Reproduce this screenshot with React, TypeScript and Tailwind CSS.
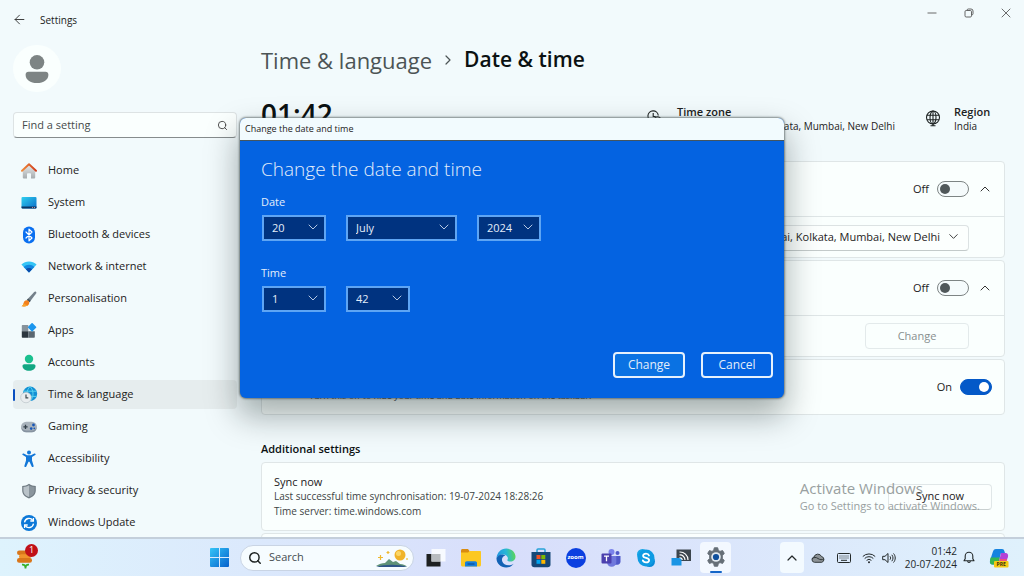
import React, { useState } from 'react';
import { ArrowLeft, ChevronDown, ChevronRight, ChevronUp, Minus, Search, X } from 'lucide-react';

interface NavItem {
  label: string;
  icon: React.ReactNode;
}

const HomeIcon = () => (
  <svg width="16" height="16" viewBox="0 0 16 16">
    <defs>
      <linearGradient id="wall" x1="0" y1="0" x2="0" y2="1">
        <stop offset="0" stopColor="#e3e5e6" />
        <stop offset="1" stopColor="#a5abae" />
      </linearGradient>
      <linearGradient id="roof" x1="0" y1="0" x2="1" y2="0">
        <stop offset="0" stopColor="#ef8a3a" />
        <stop offset="1" stopColor="#cf3b1b" />
      </linearGradient>
    </defs>
    <path d="M8 2.6 14.2 8v6.600a1 1 0 0 1-1 1H10V11a.8.8 0 0 0-.8-.8H6.800A.8.8 0 0 0 6 11v4.600H2.800a1 1 0 0 1-1-1V8z" fill="url(#wall)" />
    <path d="M1 7.800 8 1.300l7 6.500" fill="none" stroke="url(#roof)" strokeWidth="1.900" strokeLinecap="round" strokeLinejoin="round" />
  </svg>
);

const SystemIcon = () => (
  <svg width="16" height="16" viewBox="0 0 16 16">
    <defs>
      <linearGradient id="screen" x1="0" y1="0" x2="1" y2="1">
        <stop offset="0" stopColor="#2fd0f0" />
        <stop offset="1" stopColor="#0a6cc8" />
      </linearGradient>
    </defs>
    <rect x="0.5" y="2" width="15" height="11.500" rx="1" fill="url(#screen)" />
    <path d="M.5 11.500h15v1a1 1 0 0 1-1 1h-13a1 1 0 0 1-1-1z" fill="#0a3564" />
    <path d="M11 12.500h1M13 12.500h1" stroke="#e8a0a0" strokeWidth="0.8" />
  </svg>
);

const BluetoothIcon = () => (
  <svg width="16" height="18" viewBox="0 0 16 18">
    <rect x="2" y="0.5" width="12" height="17" rx="6" fill="#0a6ff0" />
    <path d="M5 6l6 6-3 2.800V3.200L11 6l-6 6" fill="none" stroke="#fff" strokeWidth="1.200" strokeLinejoin="round" strokeLinecap="round" />
  </svg>
);

const NetworkIcon = () => (
  <svg width="16" height="16" viewBox="0 0 16 16">
    <path d="M8 13.400.4 5.600C4.600 1.600 11.400 1.600 15.600 5.600z" fill="#35c4f5" />
    <path d="M8 13.400 2.600 7.900c3-2.900 7.800-2.900 10.800 0z" fill="#1287e0" />
    <path d="M8 13.400 4.900 10.200c1.700-1.700 4.500-1.700 6.200 0z" fill="#0c4ba8" />
  </svg>
);

const BrushIcon = () => (
  <svg width="16" height="16" viewBox="0 0 16 16">
    <path d="M14.900.7c.7.6.6 1.300.2 1.900L8.500 11.300 5.800 8.900 13.200 1c.5-.5 1.200-.7 1.700-.3z" fill="#74808a" />
    <path d="M8.500 11.300 5.800 8.900l1.300-1.300 2.600 2.200z" fill="#4c5860" />
    <path d="M5.500 9.200c1.800 0 3 1.300 2.700 3C7.800 14.800 4.500 15.900.6 15.300c1.600-1 1.700-2 2.100-3.600.4-1.600 1.300-2.500 2.800-2.500z" fill="#f3801c" />
    <path d="M2.700 12c1 1.400 2.400 2 4.400 2-1.400 1.400-3.900 1.700-6.500 1.300 1.500-.9 1.800-1.900 2.100-3.300z" fill="#f9a42e" />
  </svg>
);

const AppsIcon = () => (
  <svg width="16" height="16" viewBox="0 0 16 16">
    <path d="M1.500 2h5.800v6.300H.8V2.700A.7.7 0 0 1 1.500 2z" fill="#87929b" />
    <path d="M.8 8.300h6.500v6.500H1.500a.7.7 0 0 1-.7-.7z" fill="#2c363e" />
    <path d="M7.300 8.300h6.500v5.800a.7.7 0 0 1-.7.7H7.300z" fill="#5b6770" />
    <rect x="7.900" y="1" width="6.400" height="6.400" rx="0.800" transform="rotate(45 11.100 4.200)" fill="#1b96ee" />
  </svg>
);

const AccountsIcon = () => (
  <svg width="16" height="18" viewBox="0 0 16 18">
    <circle cx="8" cy="5" r="4.200" fill="#1bc08f" />
    <path d="M3.300 10.200h9.400c1.100 0 1.800.7 1.800 1.800 0 3-2.900 4.800-6.500 4.800S1.500 15 1.500 12c0-1.100.7-1.800 1.800-1.800z" fill="#12a783" />
  </svg>
);

const TimeIcon = () => (
  <svg width="18" height="18" viewBox="0 0 18 18">
    <circle cx="10" cy="7.800" r="7.200" fill="#1490d4" />
    <path d="M10 .6c-4 3.500-4 11 0 14.400M10 .6c4 3.500 4 11 0 14.400M3.400 5.200h13.200M3.400 10.400h13.200" fill="none" stroke="#57d3f1" strokeWidth="1" />
    <circle cx="6" cy="11.500" r="5.300" fill="#e9edef" stroke="#b3bdc2" strokeWidth="0.600" />
    <path d="M6 8.400v3.400h2.300" fill="none" stroke="#414c52" strokeWidth="1.200" />
  </svg>
);

const GamingIcon = () => (
  <svg width="18" height="16" viewBox="0 0 18 16">
    <rect x="1" y="2.800" width="16" height="10.400" rx="5.200" fill="#a9b3bc" />
    <path d="M1.200 8.200c.2 3 2.300 5 5 5h5.600c2.700 0 4.800-2 5-5-.8 2-2.600 3.200-5 3.200H6.200c-2.400 0-4.200-1.200-5-3.200z" fill="#8793a0" />
    <path d="M5.500 5.700v4.200M3.400 7.800h4.200" stroke="#33404a" strokeWidth="1.300" />
    <circle cx="13.500" cy="6" r="1.400" fill="#1757b8" />
    <circle cx="11.200" cy="9.600" r="1.300" fill="#1757b8" />
    <circle cx="14.300" cy="9.300" r="0.900" fill="#1757b8" />
  </svg>
);

const AccessibilityIcon = () => (
  <svg width="16" height="18" viewBox="0 0 16 18">
    <circle cx="8" cy="2.600" r="2" fill="#1377d8" />
    <path d="M2.700 3.500 6 5.300h4l3.300-1.800c1.200-.5 1.900 1 .9 1.600L11 7v3.400l1.600 5.300c.4 1.300-1.400 1.900-1.900.7L8.500 11.800h-1l-2.200 4.600c-.5 1.200-2.300.6-1.900-.7L5 10.400V7L1.800 5.100c-1-.6-.3-2.100.9-1.600z" fill="#1377d8" />
  </svg>
);

const ShieldIcon = () => (
  <svg width="16" height="16" viewBox="0 0 16 16">
    <path d="M8 .8c2 1.500 4.300 2.100 6.800 2.200v4.600c0 3.800-2.500 6.300-6.800 7.800C3.700 13.900 1.200 11.400 1.200 7.600V3C3.700 2.900 6 2.300 8 .8z" fill="#6f7a82" />
    <path d="M8 2.200c-1.700 1.100-3.600 1.600-5.600 1.800v3.700c0 3 1.900 5.100 5.600 6.400z" fill="#b9c2c8" />
    <path d="M8 2.200c1.700 1.100 3.600 1.600 5.600 1.800v3.700c0 3-1.900 5.100-5.600 6.400z" fill="#8a959d" />
  </svg>
);

const UpdateIcon = () => (
  <svg width="16" height="16" viewBox="0 0 16 16">
    <circle cx="8" cy="8" r="8" fill="#0c78d8" />
    <path d="M3.500 7.300A4.600 4.600 0 0 1 11.800 5.300M12.500 8.700A4.600 4.600 0 0 1 4.200 10.700" fill="none" stroke="#fff" strokeWidth="1.300" />
    <path d="M12.400 3v3H9.300M3.600 13v-3h3.100" fill="none" stroke="#fff" strokeWidth="1.300" />
  </svg>
);

const navItems: NavItem[] = [
  { label: 'Home', icon: <HomeIcon /> },
  { label: 'System', icon: <SystemIcon /> },
  { label: 'Bluetooth & devices', icon: <BluetoothIcon /> },
  { label: 'Network & internet', icon: <NetworkIcon /> },
  { label: 'Personalisation', icon: <BrushIcon /> },
  { label: 'Apps', icon: <AppsIcon /> },
  { label: 'Accounts', icon: <AccountsIcon /> },
  { label: 'Time & language', icon: <TimeIcon /> },
  { label: 'Gaming', icon: <GamingIcon /> },
  { label: 'Accessibility', icon: <AccessibilityIcon /> },
  { label: 'Privacy & security', icon: <ShieldIcon /> },
  { label: 'Windows Update', icon: <UpdateIcon /> },
];

function TitleBar() {
  return (
    <header className="flex h-9 shrink-0 items-center">
      <button aria-label="Back" className="ml-[11px] flex h-6 w-4 items-center justify-center pt-[3px] text-[#333]">
        <ArrowLeft size={15} strokeWidth={1.500} />
      </button>
      <span className="ml-[13px] pt-1 text-[10px] text-[#222]">Settings</span>
      <div className="ml-auto flex h-[26px] items-center self-start text-[#555]">
        <button aria-label="Minimise" className="flex w-[37px] justify-center">
          <Minus size={14} strokeWidth={1.500} />
        </button>
        <button aria-label="Restore" className="flex w-[37px] justify-center">
          <svg width="10" height="10" viewBox="0 0 10 10" fill="none" stroke="currentColor" strokeWidth="0.9">
            <rect x="1" y="2.500" width="6.500" height="6.500" rx="1.200" />
            <path d="M3 2.300C3 1.500 3.500 1 4.300 1H7a2 2 0 0 1 2 2v2.700C9 6.500 8.500 7 7.700 7" />
          </svg>
        </button>
        <button aria-label="Close" className="flex w-[37px] justify-center">
          <X size={16} strokeWidth={1.300} />
        </button>
      </div>
    </header>
  );
}

function Sidebar() {
  return (
    <aside className="flex w-60 shrink-0 flex-col pl-[13px] pr-[3px] pt-[9px]">
      <div className="flex h-12 w-12 items-center justify-center rounded-full bg-[#fafffe]">
        <svg width="24" height="28" viewBox="0 0 24 28" fill="#7d8484">
          <circle cx="12" cy="7.300" r="7.300" />
          <path d="M3.500 16.800h17c1.800 0 2.900 1.100 2.900 2.900 0 5-4.700 8.300-11.400 8.300S.6 24.700.6 19.700c0-1.800 1.100-2.900 2.900-2.900z" />
        </svg>
      </div>

      <label className="mt-5 flex h-[26px] items-center rounded border border-[#dde3e4] border-b-[#868c8d] bg-[#fafffe] px-2">
        <input
          type="text"
          aria-label="Find a setting"
          placeholder="Find a setting"
          className="min-w-0 flex-1 bg-transparent text-[11px] text-[#333] outline-none placeholder:text-[#454b4b]"
        />
        <Search size={11} strokeWidth={2} className="text-[#444]" />
      </label>

      <nav className="mt-[18px] flex flex-col gap-[3px]">
        {navItems.map((item) => {
          const active = item.label === 'Time & language';
          return (
            <a
              key={item.label}
              href="#"
              aria-current={active ? 'page' : undefined}
              className={`flex h-[29px] items-center rounded ${active ? 'bg-[#e6edee]' : ''}`}
            >
              <span className={`h-3 w-[2px] rounded-full ${active ? 'bg-[#0a4fc0]' : ''}`} />
              <span className="flex w-7 justify-center">{item.icon}</span>
              <span className="ml-[5px] text-[11px] text-[#1d2222]">{item.label}</span>
            </a>
          );
        })}
      </nav>
    </aside>
  );
}

function Toggle({ label, defaultOn = false }: { label: string; defaultOn?: boolean }) {
  const [on, setOn] = useState(defaultOn);

  return (
    <label className="flex items-center gap-2 text-[11px] text-[#1d2222]">
      <span>{on ? 'On' : 'Off'}</span>
      <input
        type="checkbox"
        role="switch"
        aria-label={label}
        checked={on}
        onChange={(e) => setOn(e.target.checked)}
        className="flex h-4 w-8 appearance-none items-center rounded-full border border-[#7d8484] bg-[#f5fbfc] px-[2px] before:h-[10px] before:w-[10px] before:rounded-full before:bg-[#50585a] checked:justify-end checked:border-[#0459c8] checked:bg-[#0459c8] checked:before:bg-white"
      />
    </label>
  );
}

function DateTimePage() {
  return (
    <main className="flex min-w-0 flex-1 flex-col pl-[21px] pr-[19px]">
      <h1 className="flex h-12 shrink-0 items-center text-[22px] text-[#0b1112]">
        <a href="#" className="font-medium text-[#4c5455]">Time &amp; language</a>
        <ChevronRight size={16} strokeWidth={1.800} className="mx-2 text-[#4c5455]" />
        <span className="text-[21px] font-semibold">Date &amp; time</span>
      </h1>

      <div className="flex h-[77px] shrink-0 items-start pt-5">
        <span className="-mt-1.5 text-[28px] font-semibold leading-8 text-[#0b1112]">01:42</span>
        <div className="ml-auto flex gap-4">
          <svg width="14" height="14" viewBox="0 0 14 14" fill="none" stroke="#1d2222" strokeWidth="1.100" className="mt-1.5">
            <path d="M11.300 5.500A5.200 5.200 0 1 0 5.500 11.200M6.200 3v3.500h2.500" />
            <circle cx="10.500" cy="9.800" r="3" />
          </svg>
          <div className="w-[218px] whitespace-nowrap leading-[15px] text-[#1d2222]">
            <p className="text-[11px] font-semibold">Time zone</p>
            <p className="flex justify-end text-[10px]">(UTC+05:30) Chennai, Kolkata, Mumbai, New Delhi</p>
          </div>
        </div>
        <div className="ml-[30px] flex w-20 gap-[13px]">
          <svg width="16" height="18" viewBox="0 0 16 18" fill="none" stroke="#1d2222" strokeWidth="1.100" className="mt-1.5 shrink-0">
            <circle cx="8" cy="7.500" r="6.500" />
            <ellipse cx="8" cy="7.500" rx="3" ry="6.500" />
            <path d="M2 5.300h12M2 9.700h12M8 1v14.500M5.500 15.800h5" />
          </svg>
          <div className="leading-[15px] text-[#1d2222]">
            <p className="text-[11px] font-semibold">Region</p>
            <p className="text-[10px]">India</p>
          </div>
        </div>
      </div>

      <div className="flex shrink-0 flex-col gap-[2px]">
        <section className="rounded border border-[#dfe6e7] bg-[#fafffe]">
          <div className="flex h-[54px] items-center justify-end gap-2 pr-[11px]">
            <Toggle label="Automatic time zone" />
            <button aria-label="Collapse time zone" className="text-[#333]">
              <ChevronUp size={16} strokeWidth={1.500} />
            </button>
          </div>
          <div className="flex h-[41px] items-center justify-end border-t border-[#dfe6e7] pr-[35px]">
            <div className="relative">
              <select
                aria-label="Time zone"
                className="h-[26px] w-[320px] appearance-none rounded border border-[#dce2e3] border-b-[#c3caca] bg-[#fcfffe] pl-3 pr-7 text-[11px] text-[#1d2222] [text-align-last:right]"
              >
                <option>(UTC+05:30) Chennai, Kolkata, Mumbai, New Delhi</option>
              </select>
              <ChevronDown size={15} strokeWidth={1.500} className="pointer-events-none absolute right-2 top-1.5 text-[#333]" />
            </div>
          </div>
        </section>

        <section className="rounded border border-[#dfe6e7] bg-[#fafffe]">
          <div className="flex h-[54px] items-center justify-end gap-2 pr-[11px]">
            <Toggle label="Automatic time" />
            <button aria-label="Collapse time" className="text-[#333]">
              <ChevronUp size={16} strokeWidth={1.500} />
            </button>
          </div>
          <div className="flex h-[41px] items-center justify-end border-t border-[#dfe6e7] pr-[35px]">
            <button disabled className="h-[26px] w-[104px] rounded border border-[#e3eaeb] bg-[#fafffe] text-[11px] text-[#888f8f]">
              Change
            </button>
          </div>
        </section>

        <section className="flex h-14 items-center justify-between rounded border border-[#dfe6e7] bg-[#fafffe] pl-[47px] pr-3">
          <p className="mt-4 text-[9px] leading-[15px] text-[#3d4444]">
            Turn this off to hide your time and date information on the taskbar.
          </p>
          <Toggle label="Time and date on the taskbar" defaultOn />
        </section>
      </div>

      <h2 className="mt-[26px] shrink-0 text-[11px] font-semibold leading-4 text-[#0b1112]">Additional settings</h2>

      <section className="mt-[5px] flex h-[69px] shrink-0 items-center justify-between rounded border border-[#dfe6e7] bg-[#fafffe] px-3">
        <div className="text-[10px] leading-[15px] text-[#3d4444]">
          <p className="text-[11px] text-[#1d2222]">Sync now</p>
          <p>Last successful time synchronisation: 19-07-2024 18:28:26</p>
          <p>Time server: time.windows.com</p>
        </div>
        <button className="h-[26px] w-[104px] rounded border border-[#e0e7e8] border-b-[#c9d0d0] bg-[#fcfffe] text-[11px] text-[#1d2222]">
          Sync now
        </button>
      </section>
      <section className="mt-[2px] h-12 shrink-0 rounded border border-[#dfe6e7] bg-[#fafffe]" />
    </main>
  );
}

function DialogSelect({ label, value, wide = false }: { label: string; value: string; wide?: boolean }) {
  return (
    <div className={`relative h-[26px] ${wide ? 'w-[111px]' : 'w-16'}`}>
      <select
        aria-label={label}
        defaultValue={value}
        className="h-full w-full appearance-none border-2 border-[#5ea5f4] bg-[#003380] pl-2 text-[11px] text-[#e3edfa]"
      >
        <option>{value}</option>
      </select>
      <ChevronDown size={16} strokeWidth={1.300} className="pointer-events-none absolute right-[5px] top-[5px] text-[#d3e0f2]" />
    </div>
  );
}

function ChangeDialog() {
  return (
    <div
      role="dialog"
      aria-label="Change the date and time"
      className="absolute left-60 top-[118px] z-10 w-[544px] overflow-hidden rounded-md bg-[#0463e1] shadow-[0_0_2px_1px_rgba(60,70,70,0.6),0_16px_32px_2px_rgba(0,20,20,0.34)]"
    >
      <div className="flex h-[23px] items-center border-b border-[#44555f] bg-[#f2fbfe] pl-[5px] text-[9px] text-[#1d2222]">
        Change the date and time
      </div>
      <div className="flex h-[257px] flex-col pl-[21px] pr-[11px] pt-[14px]">
        <h2 className="text-[19px] leading-7 font-light text-[#e3edfa]">Change the date and time</h2>
        <fieldset className="mt-[11px]">
          <legend className="text-[11px] leading-4 text-[#e3edfa]">Date</legend>
          <div className="mt-1 flex gap-5 pl-px">
            <DialogSelect label="Day" value="20" />
            <DialogSelect label="Month" value="July" wide />
            <DialogSelect label="Year" value="2024" />
          </div>
        </fieldset>
        <fieldset className="mt-[25px]">
          <legend className="text-[11px] leading-4 text-[#e3edfa]">Time</legend>
          <div className="mt-1 flex gap-5 pl-px">
            <DialogSelect label="Hour" value="1" />
            <DialogSelect label="Minute" value="42" />
          </div>
        </fieldset>
        <div className="mb-5 mt-auto flex justify-end gap-4">
          <button className="h-[26px] w-[72px] rounded border-2 border-[#e6f1fc] bg-[#0a72e3] text-[12px] text-[#e3edfa]">Change</button>
          <button className="h-[26px] w-[72px] rounded border-2 border-[#e6f1fc] text-[12px] text-[#e3edfa]">Cancel</button>
        </div>
      </div>
    </div>
  );
}

const taskbarApps = [
  {
    name: 'Task view',
    icon: (
      <svg width="20" height="20" viewBox="0 0 20 20">
        <rect x="0.500" y="6" width="14" height="12.500" fill="#1d2021" />
        <rect x="5.500" y="1" width="14" height="12.500" fill="#f7faff" />
        <path d="M5.500 6h9v7.500h-9z" fill="#b8bcc0" />
      </svg>
    ),
  },
  {
    name: 'File Explorer',
    icon: (
      <svg width="20" height="20" viewBox="0 0 20 20">
        <path d="M0 2.500C0 1.700.6 1 1.500 1H7l1.500 2v3H0z" fill="#d98c10" />
        <path d="M0 4.500h7L9 3h10c.6 0 1 .4 1 1v13c0 .8-.6 1.500-1.500 1.500h-17C.6 18.500 0 17.800 0 17z" fill="#fcc821" />
        <path d="M4 18.500V15c0-1 .7-1.800 1.800-1.800h8.400c1.100 0 1.800.8 1.800 1.800v3.500z" fill="#1780dc" />
        <path d="M6.500 16h7" stroke="#0b529e" strokeWidth="1.300" />
      </svg>
    ),
  },
  {
    name: 'Edge',
    icon: (
      <svg width="20" height="20" viewBox="0 0 20 20">
        <defs>
          <linearGradient id="edge" x1="0" y1="0.300" x2="1" y2="0.200">
            <stop offset="0" stopColor="#2296e0" />
            <stop offset="0.500" stopColor="#27b7d6" />
            <stop offset="1" stopColor="#5fd84c" />
          </linearGradient>
        </defs>
        <path d="M.5 10C1 4.500 5 .5 10.200.5c5.400 0 9.300 3.700 9.300 8 0 3.200-2.300 5-5 5-2.300 0-3.400-.9-3.100-1.600.8-1 .7-2.900-.6-4C7.800 5.500 3 6.500.5 10z" fill="url(#edge)" />
        <path d="M.5 10c2-3.300 6-4.300 9-2.600-2.700.5-4.200 3-3.300 5.800 1.300 4 6.800 5.400 11.500 2.500-2 2.700-5 3.900-7.700 3.800C4.500 19.500.2 15.200.5 10z" fill="#1262b5" />
      </svg>
    ),
  },
  {
    name: 'Microsoft Store',
    icon: (
      <svg width="20" height="20" viewBox="0 0 20 20">
        <path d="M6 4V2c0-.6.4-1 1-1h6c.6 0 1 .4 1 1v2" fill="none" stroke="#27a3d8" strokeWidth="1.500" />
        <path d="M.5 4h19v12.500c0 1.700-1 2.800-2.800 2.800H3.300C1.600 19.300.5 18.200.5 16.500z" fill="#174878" />
        <path d="M5.500 7h4v4h-4z" fill="#f25022" />
        <path d="M10.300 7h4v4h-4z" fill="#7fba00" />
        <path d="M5.500 11.800h4v4h-4z" fill="#00a4ef" />
        <path d="M10.300 11.800h4v4h-4z" fill="#ffb900" />
      </svg>
    ),
  },
  {
    name: 'Zoom',
    icon: (
      <span className="flex h-5 w-5 items-center justify-center rounded-full bg-[#0b3fe0] text-[6px] font-bold text-white">
        zoom
      </span>
    ),
  },
  {
    name: 'Teams',
    icon: (
      <svg width="20" height="20" viewBox="0 0 20 20">
        <circle cx="10.500" cy="4" r="3" fill="#7b83eb" />
        <circle cx="16.500" cy="5" r="2" fill="#5059c9" />
        <path d="M14 8h5.500v5.500c0 2-1.300 3.200-3 3.200H14z" fill="#5059c9" />
        <path d="M6 8h9.300v6c0 3-2 4.700-4.700 4.700C8 18.700 6 17 6 14z" fill="#7078dc" />
        <rect x="0.500" y="5.500" width="10" height="10" rx="1" fill="#4b3fae" />
        <path d="M3 8.200h5M5.500 8.200v5" stroke="#fff" strokeWidth="1.300" />
      </svg>
    ),
  },
  {
    name: 'Skype',
    icon: (
      <svg width="20" height="20" viewBox="0 0 20 20">
        <circle cx="6.500" cy="6.500" r="5.500" fill="#17a6e6" />
        <circle cx="13.500" cy="13.500" r="5.500" fill="#0a8bd8" />
        <circle cx="10" cy="10" r="8.500" fill="#0f9be3" />
        <path d="M13 7.500C12.500 6 11.400 5.600 10 5.600c-1.700 0-2.900.8-2.900 2.100 0 3 6 1.500 6 4.500 0 1.400-1.300 2.200-3.100 2.200-1.700 0-2.800-.7-3.200-2.100" fill="none" stroke="#fff" strokeWidth="1.800" strokeLinecap="round" />
      </svg>
    ),
  },
  {
    name: 'Cast',
    icon: (
      <svg width="20" height="20" viewBox="0 0 20 20">
        <rect x="5.500" y="1.500" width="14.500" height="11.500" fill="#3c454d" />
        <rect x="0.500" y="10" width="10" height="7.500" fill="#1a95e5" />
        <path d="M8.500 4a8 8 0 0 1 8.500 8M8.500 7a5 5 0 0 1 5.500 5M8.500 9.800a2.300 2.300 0 0 1 2.700 2.200" fill="none" stroke="#fff" strokeWidth="1.200" />
      </svg>
    ),
  },
];

function Taskbar() {
  return (
    <footer className="relative z-20 flex h-[39px] shrink-0 items-center border-t-2 border-[#c4cfdb] bg-linear-to-r from-[#def3fd] via-[#d8defb] to-[#dff1fc]">
      <div className="flex w-[202px] shrink-0 pl-4">
        <button aria-label="Widgets" className="relative h-6 w-5">
          <svg width="20" height="24" viewBox="0 0 20 24">
            <path d="M9.500 22.500c0-3-1-4-3.500-3.800M9.500 22.500c0-3 1-4 3.500-3.800" fill="none" stroke="#38b02a" strokeWidth="1.800" />
            <rect x="1" y="4.500" width="13" height="4.500" rx="2.200" fill="#d9761a" />
            <rect x="3" y="8.300" width="12" height="4.500" rx="2.200" fill="#f0932b" />
            <rect x="1" y="12" width="15" height="4.800" rx="2.200" fill="#d9761a" />
          </svg>
          <span className="absolute -right-[2px] -top-[2px] flex h-[13px] w-[13px] items-center justify-center rounded-full bg-[#c01018] text-[9px] text-white">1</span>
        </button>
      </div>

      <div className="flex items-center">
        <button aria-label="Start" className="flex w-[35px] justify-center">
          <svg width="19" height="19" viewBox="0 0 19 19">
            <defs>
              <linearGradient id="start" gradientUnits="userSpaceOnUse" x1="0" y1="0" x2="19" y2="19">
                <stop offset="0" stopColor="#35c5f7" />
                <stop offset="1" stopColor="#0560cc" />
              </linearGradient>
            </defs>
            <path d="M1 0h8v9H0V1a1 1 0 0 1 1-1zM10 0h8a1 1 0 0 1 1 1v8h-9zM0 10h9v9H1a1 1 0 0 1-1-1zM10 10h9v8a1 1 0 0 1-1 1h-8z" fill="url(#start)" />
          </svg>
        </button>
        <label className="ml-[3px] flex h-[26px] w-[174px] items-center rounded-full border border-[#c9d4e4] bg-[#f6fcff] pl-[7px] pr-1">
          <Search size={14} strokeWidth={2.500} className="shrink-0 text-[#1d2222]" />
          <input
            type="text"
            aria-label="Search"
            placeholder="Search"
            className="ml-[7px] min-w-0 flex-1 bg-transparent text-[11px] outline-none placeholder:text-[#454c50]"
          />
          <svg width="34" height="20" viewBox="0 0 34 20" className="shrink-0">
            <circle cx="25" cy="7" r="5.500" fill="#f0b32a" />
            <circle cx="23.500" cy="5.500" r="2.500" fill="#fbd768" />
            <path d="M1 18c3-2 6-3 9-3l4-4 4 3 3-1 4 3c3 0 5 1 7 2.500z" fill="#5f9277" />
            <path d="M1 19c8-3 24-3 31 0z" fill="#2f5687" />
            <path d="M5.500 7v5M3 9.500h5M13 3v3M11.500 4.500h3M32 10v2" stroke="#efb92f" strokeWidth="1.200" />
          </svg>
        </label>

        <div className="ml-1 flex items-center">
          {taskbarApps.map((app) => (
            <button key={app.name} aria-label={app.name} className="flex w-[35px] justify-center">
              {app.icon}
            </button>
          ))}
          <button aria-label="Settings app" className="ml-[2px] flex h-[31px] w-[31px] flex-col items-center justify-end gap-1 rounded bg-[#f3f8ff]">
            <svg width="20" height="20" viewBox="0 0 20 20">
              <path d="M8.300.8h3.400l.6 2.600 1.700 1 2.600-.8 1.700 2.900-2 1.900v3.200l2 1.900-1.700 2.900-2.600-.8-1.700 1-.6 2.600H8.300l-.6-2.600-1.700-1-2.600.8-1.700-2.900 2-1.900V8.400l-2-1.900 1.700-2.900 2.600.8 1.700-1z" fill="#666f77" stroke="#666f77" strokeLinejoin="round" />
              <circle cx="10" cy="10" r="4.800" fill="#e3eaf0" />
              <circle cx="10" cy="10" r="3.100" fill="#0f4f9c" />
            </svg>
            <span className="h-[2px] w-3 rounded-full bg-[#1465c8]" />
          </button>
        </div>
      </div>

      <div className="ml-auto flex items-center pr-[15px] text-[#222829]">
        <button aria-label="Show hidden icons" className="flex h-[31px] w-6 items-center justify-center rounded bg-[#f3faff]">
          <ChevronUp size={16} strokeWidth={1.800} />
        </button>
        <svg width="14" height="10" viewBox="0 0 14 10" className="ml-[7px]">
          <path d="M3.500 9.300a2.700 2.700 0 0 1-.5-5.300A4 4 0 0 1 10.500 3.500a3 3 0 0 1 .3 5.800z" fill="#8c9296" stroke="#333a3d" strokeWidth="1" />
          <path d="M1 6c2-2 4-2 6-.5S11 7 13 6" fill="none" stroke="#333a3d" />
        </svg>
        <svg width="14" height="10" viewBox="0 0 14 10" fill="none" stroke="currentColor" className="ml-3">
          <rect x="0.500" y="0.500" width="13" height="9" rx="1" />
          <path d="M2.500 3h9M2.500 5h9" strokeDasharray="1 1" />
          <path d="M4 7.300h6" />
        </svg>
        <svg width="14" height="12" viewBox="0 0 14 12" fill="none" stroke="currentColor" className="ml-[11px]">
          <path d="M.8 4.500a8.800 8.800 0 0 1 12.400 0M2.700 6.500a6 6 0 0 1 8.600 0M4.600 8.400a3.400 3.400 0 0 1 4.800 0" />
          <circle cx="7" cy="10.300" r="1" fill="currentColor" stroke="none" />
        </svg>
        <svg width="14" height="12" viewBox="0 0 14 12" fill="none" stroke="currentColor" className="ml-[6px]">
          <path d="M.7 4.300H3L6 1.500v9L3 7.700H.7z" strokeLinejoin="round" />
          <path d="M8 4.300c.8 1 .8 2.400 0 3.400M9.800 2.800c1.600 1.900 1.600 4.500 0 6.400M11.500 1.500c2.300 2.600 2.300 6.400 0 9" />
        </svg>
        <time className="ml-[9px] flex flex-col text-right text-[10px] leading-[13px]">
          <span>01:42</span>
          <span>20-07-2024</span>
        </time>
        <svg width="12" height="13" viewBox="0 0 12 13" fill="none" stroke="currentColor" strokeWidth="1.100" className="ml-[6px]">
          <path d="M2.200 5a3.800 3.800 0 0 1 7.600 0v2.700l1.200 2H1l1.200-2zM4.600 10c.2 2 2.600 2 2.800 0" strokeLinejoin="round" />
        </svg>
        <svg width="20" height="20" viewBox="0 0 20 20" className="ml-[14px]">
          <path d="M7 1h6c1.500 0 2 .8 2.500 2.500L16 5h-4l-2.500 9c-.4 1.500-1 2.500-2.500 2.500H3.500C1.500 16.500.5 15 1 12.500L3.800 4C4.500 2 5 1 7 1z" fill="#1683e0" />
          <path d="M1.600 9.500 1 12.500C.6 15 1.500 16.500 3.500 16.500H7c1.500 0 2.100-1 2.500-2.500l1.300-4.500z" fill="#36b553" />
          <path d="M12 5h4.500c2 0 3 1.500 2.500 4l-2 5c-.5 1.500-1.500 2.500-3 2.500H8c1 0 1.500-1 2-2.500z" fill="#b442d6" />
          <path d="M10.600 11h7.700l-1.300 3c-.5 1.500-1.500 2.500-3 2.500H8c1 0 1.500-1 2-2.500z" fill="#ee4f7c" />
          <rect x="5" y="13" width="14.500" height="6.500" rx="1" fill="#f6c915" />
          <text x="12.200" y="18.200" fontSize="5" fontWeight="700" textAnchor="middle" fill="#38300a">PRE</text>
        </svg>
      </div>
    </footer>
  );
}

export default function App() {
  return (
    <div className="relative flex h-screen flex-col overflow-hidden bg-[#f2fafc] font-['Open_Sans','Noto_Sans',sans-serif]">
      <TitleBar />
      <div className="flex min-h-0 flex-1 overflow-hidden">
        <Sidebar />
        <DateTimePage />
      </div>
      <Taskbar />
      <ChangeDialog />
      <div className="pointer-events-none absolute bottom-[62px] right-11 z-10 text-[#98a0a0]">
        <p className="text-[15px] leading-5">Activate Windows</p>
        <p className="text-[11px] leading-4">Go to Settings to activate Windows.</p>
      </div>
    </div>
  );
}
